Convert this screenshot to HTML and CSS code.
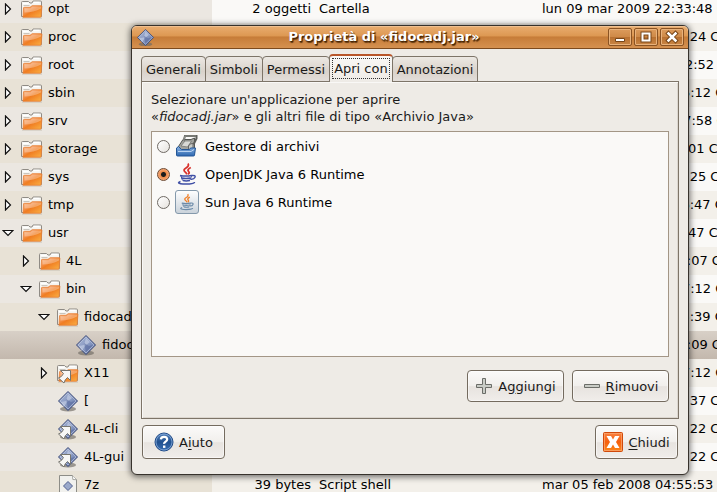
FILE: index.html
```html
<!DOCTYPE html>
<html lang="it">
<head>
<meta charset="utf-8">
<title>Proprietà di «fidocadj.jar»</title>
<link rel="stylesheet" href="styles.css">
</head>
<body>
<svg class="sprite" aria-hidden="true">
  <defs>
    <linearGradient id="g-folder" x1="0" y1="0" x2="1" y2="1">
      <stop offset="0" stop-color="#f7b98a"/><stop offset=".35" stop-color="#f4904a"/><stop offset=".5" stop-color="#f07d22"/><stop offset="1" stop-color="#fbb144"/>
    </linearGradient>
    <linearGradient id="g-diamond" x1="0" y1="0" x2="1" y2="1">
      <stop offset="0" stop-color="#a9b6d4"/><stop offset=".5" stop-color="#8b9cc4"/><stop offset="1" stop-color="#5a6c9e"/>
    </linearGradient>
    <linearGradient id="g-blue" x1="0" y1="0" x2="0" y2="1">
      <stop offset="0" stop-color="#8db4e2"/><stop offset="1" stop-color="#2c67b0"/>
    </linearGradient>
    <linearGradient id="g-help" x1="0" y1="0" x2="0" y2="1">
      <stop offset="0" stop-color="#5683bd"/><stop offset=".5" stop-color="#20508f"/><stop offset="1" stop-color="#3b70b4"/>
    </linearGradient>
    <linearGradient id="g-close" x1="0" y1="0" x2="0" y2="1">
      <stop offset="0" stop-color="#f98344"/><stop offset=".5" stop-color="#f65e0c"/><stop offset="1" stop-color="#fb8a1c"/>
    </linearGradient>
    <linearGradient id="g-tile" x1="0" y1="0" x2="0" y2="1">
      <stop offset="0" stop-color="#ffffff"/><stop offset="1" stop-color="#c9d2da"/>
    </linearGradient>
  </defs>
  <symbol id="arrow-right" viewBox="0 0 12 12"><path d="M3.500 1v10l5-5z" fill="#fff" stroke="#111" stroke-width="1.200"/></symbol>
  <symbol id="arrow-down" viewBox="0 0 12 12"><path d="M1 3.500h10L6 8.500z" fill="#fff" stroke="#111" stroke-width="1.200"/></symbol>
  <symbol id="folder" viewBox="0 0 24 24">
    <path d="M2 21h20" stroke="#b9b1a6" opacity=".7"/>
    <path d="M1.500 19.500V5.500q0-1 1-1h6l1.500 1.500h2l1-2h7.500q1 0 1 1v14.500z" fill="#f5f4f0" stroke="#8f8b85"/>
    <path d="M3 6.500h5.500M13.500 5.500h6" stroke="#fff" stroke-width="1.500"/>
    <path d="M3.500 8.500h6" stroke="#c9c5bd"/>
    <path d="M3 20.200l.5-9.200q0-.7.8-.7h5.700l2.200-1.600h9q.7 0 .7.700l-.8 10.100q0 .7-.7.700z" fill="url(#g-folder)" stroke="#e77f35" stroke-width=".8"/>
    <path d="M4.500 15.500q9-.2 16.500-4l.2-2h-8.800l-2 1.700H4.500z" fill="#fff" opacity=".3"/>
  </symbol>
  <symbol id="diamond" viewBox="0 0 24 24">
    <ellipse cx="12" cy="20" rx="8" ry="2.500" fill="#6f6a62" opacity=".65"/>
    <path d="M12 2.500l9.500 9.500-9.500 9.500L2.500 12z" fill="url(#g-diamond)" stroke="#3b4a79"/>
    <path d="M12 4l8 8-8 8-8-8z" fill="none" stroke="#c5cfe6" stroke-width=".8" opacity=".7"/>
    <path d="M12 5l4 4-5 4-3 5-3-5 5-1z" fill="#d6deef" opacity=".5"/>
    <path d="M10 10l5 3 4-1-7 7z" fill="#51649a" opacity=".5"/>
  </symbol>
  <symbol id="link" viewBox="0 0 24 24">
    <path d="M4.500 9.500h10v10l-3-3q-2.500 1.500-3.500 5.500l-5.500-5q3.500-1 5-4.500z" fill="#f7f7f5" stroke="#77766f" stroke-linejoin="round"/>
  </symbol>
  <symbol id="script" viewBox="0 0 24 24">
    <path d="M3.500 2.500h13l4 4v17h-17z" fill="#f1f1ee" stroke="#8d8d87"/>
    <path d="M16.500 2.500l.3 4 3.700.2" fill="#fff" stroke="#a8a8a2"/>
    <path d="M12 8.500l4.500 4.500-4.500 4.500L7.500 13z" fill="#9aa9cb" stroke="#526190"/>
  </symbol>
  <symbol id="archiver" viewBox="0 0 24 24">
    <path d="M2.500 14L8 5.500h8L19.500 4v15H6z" fill="#a3a49f" stroke="#555753"/>
    <path d="M8.500 7l1.500-5h11.500v2.500l-3 6" fill="none" stroke="#5d5e5a" stroke-width="2"/>
    <path d="M8.500 7L10 2h11" fill="none" stroke="#a9aaa5" stroke-width=".7"/>
    <path d="M6 12l4-5h6.500l-4 6z" fill="#d9dad6" stroke="#6f706c" stroke-width=".7"/>
    <path d="M13.500 12q1.500-3 4.500-2.500v9h-4.500z" fill="#c8cac4" stroke="#666"/>
    <path d="M1.500 14l2-1.500 3 3h8l1-1.500h5l-1 7q0 1-1 1H2.500q-1 0-1-1z" fill="url(#g-blue)" stroke="#245797"/>
    <path d="M3 17.500h13l3-2" stroke="#b9d3f1" fill="none"/>
  </symbol>
  <symbol id="java" viewBox="0 0 24 24">
    <path class="steam" d="M13 1.500q1.500 2.500-2 4.500t-.8 4q1.800 1.200 1.300 2.500M15.800 5.500q-4 2-2.300 3.800t-.5 3" fill="none" stroke-width="1.800"/>
    <path class="cup" d="M5 13.500q6 1.200 11.500 0M6.500 16q4.500 1 9 0M8 18.500q3 .9 7 0M16.500 13.500q4.500-.5 3.500 1.700t-4 2M5.500 19.500q-4 1.500 0 2.200t9 .2 5-2" fill="none" stroke-width="1.500"/>
    <path class="cup" d="M6 14l1.500 4.500M16.500 14l-1.500 4" fill="none"/>
  </symbol>
</svg>

<main class="browser">
  <table class="files">
    <colgroup><col class="c-name"><col class="c-size"><col class="c-type"><col></colgroup>
    <tbody>
      <tr><td><div class="name l0"><button class="exp" aria-label="Espandi opt"><svg><use href="#arrow-right"/></svg></button><svg class="ico"><use href="#folder"/></svg>opt</div></td><td>2 oggetti</td><td>Cartella</td><td>lun 09 mar 2009 22:33:48 CET</td></tr>
      <tr><td><div class="name l0"><button class="exp" aria-label="Espandi proc"><svg><use href="#arrow-right"/></svg></button><svg class="ico"><use href="#folder"/></svg>proc</div></td><td></td><td></td><td>gio 11 set 2008 09:14:24 CEST</td></tr>
      <tr><td><div class="name l0"><button class="exp" aria-label="Espandi root"><svg><use href="#arrow-right"/></svg></button><svg class="ico"><use href="#folder"/></svg>root</div></td><td></td><td></td><td>mar 08 apr 2008 17:02:52 CEST</td></tr>
      <tr><td><div class="name l0"><button class="exp" aria-label="Espandi sbin"><svg><use href="#arrow-right"/></svg></button><svg class="ico"><use href="#folder"/></svg>sbin</div></td><td></td><td></td><td>lun 26 gen 2009 18:25:12 CET</td></tr>
      <tr><td><div class="name l0"><button class="exp" aria-label="Espandi srv"><svg><use href="#arrow-right"/></svg></button><svg class="ico"><use href="#folder"/></svg>srv</div></td><td></td><td></td><td>gio 05 mar 2009 10:37:58 CET</td></tr>
      <tr><td><div class="name l0"><button class="exp" aria-label="Espandi storage"><svg><use href="#arrow-right"/></svg></button><svg class="ico"><use href="#folder"/></svg>storage</div></td><td></td><td></td><td>gio 16 ott 2008 21:40:01 CEST</td></tr>
      <tr><td><div class="name l0"><button class="exp" aria-label="Espandi sys"><svg><use href="#arrow-right"/></svg></button><svg class="ico"><use href="#folder"/></svg>sys</div></td><td></td><td></td><td>gio 11 set 2008 09:14:25 CEST</td></tr>
      <tr><td><div class="name l0"><button class="exp" aria-label="Espandi tmp"><svg><use href="#arrow-right"/></svg></button><svg class="ico"><use href="#folder"/></svg>tmp</div></td><td></td><td></td><td>ven 11 lug 2008 11:26:47 CEST</td></tr>
      <tr><td><div class="name l0"><button class="exp" aria-label="Comprimi usr"><svg><use href="#arrow-down"/></svg></button><svg class="ico"><use href="#folder"/></svg>usr</div></td><td></td><td></td><td>gio 16 ott 2008 16:20:47 CEST</td></tr>
      <tr><td><div class="name l1"><button class="exp" aria-label="Espandi 4L"><svg><use href="#arrow-right"/></svg></button><svg class="ico"><use href="#folder"/></svg>4L</div></td><td></td><td></td><td>sab 18 ott 2008 12:43:07 CEST</td></tr>
      <tr><td><div class="name l1"><button class="exp" aria-label="Comprimi bin"><svg><use href="#arrow-down"/></svg></button><svg class="ico"><use href="#folder"/></svg>bin</div></td><td></td><td></td><td>lun 26 gen 2009 18:27:12 CET</td></tr>
      <tr><td><div class="name l2"><button class="exp" aria-label="Comprimi fidocadj"><svg><use href="#arrow-down"/></svg></button><svg class="ico"><use href="#folder"/></svg>fidocadj</div></td><td></td><td></td><td>ven 11 lug 2008 11:35:39 CEST</td></tr>
      <tr class="selected"><td><div class="name l3"><svg class="ico"><use href="#diamond"/></svg>fidocadj.jar</div></td><td></td><td></td><td>sab 18 ott 2008 12:43:09 CEST</td></tr>
      <tr><td><div class="name l2"><button class="exp" aria-label="Espandi X11"><svg><use href="#arrow-right"/></svg></button><svg class="ico"><use href="#folder"/><use href="#link"/></svg>X11</div></td><td></td><td></td><td>lun 26 gen 2009 18:27:12 CET</td></tr>
      <tr><td><div class="name l2 leaf"><svg class="ico"><use href="#diamond"/></svg>[</div></td><td></td><td></td><td>gio 11 set 2008 14:08:37 CEST</td></tr>
      <tr><td><div class="name l2 leaf"><svg class="ico"><use href="#diamond"/><use href="#link"/></svg>4L-cli</div></td><td></td><td></td><td>gio 11 set 2008 15:51:22 CEST</td></tr>
      <tr><td><div class="name l2 leaf"><svg class="ico"><use href="#diamond"/><use href="#link"/></svg>4L-gui</div></td><td></td><td></td><td>gio 11 set 2008 15:51:22 CEST</td></tr>
      <tr><td><div class="name l2 leaf"><svg class="ico"><use href="#script"/></svg>7z</div></td><td>39 bytes</td><td>Script shell</td><td>mar 05 feb 2008 04:55:53 CET</td></tr>
    </tbody>
  </table>
</main>

<section class="dialog" role="dialog" aria-labelledby="dlg-title">
  <header class="titlebar">
    <svg class="win-icon" viewBox="2 2 20 20"><use href="#diamond" width="24" height="24"/></svg>
    <h1 id="dlg-title">Proprietà di «fidocadj.jar»</h1>
    <div class="win-buttons">
      <button aria-label="Riduci"><svg viewBox="0 0 22 16"><path d="M6.500 9.500h9v3h-9z" fill="#fff" stroke="#784618"/></svg></button>
      <button aria-label="Massimizza"><svg viewBox="0 0 22 16"><path d="M7.500 4.500h7v7h-7z" fill="none" stroke="#784618" stroke-width="4"/><path d="M7.500 4.500h7v7h-7z" fill="none" stroke="#fff" stroke-width="2"/></svg></button>
      <button aria-label="Chiudi finestra"><svg viewBox="0 0 22 16"><path d="M7.500 4.500l7 7M14.500 4.500l-7 7" stroke="#784618" stroke-width="4.500" stroke-linecap="square"/><path d="M7.500 4.500l7 7M14.500 4.500l-7 7" stroke="#fff" stroke-width="2.500" stroke-linecap="square"/></svg></button>
    </div>
  </header>

  <div class="content">
    <div class="tabs" role="tablist">
      <button role="tab" class="tab">Generali</button>
      <button role="tab" class="tab">Simboli</button>
      <button role="tab" class="tab">Permessi</button>
      <button role="tab" class="tab active" aria-selected="true"><span>Apri con</span></button>
      <button role="tab" class="tab">Annotazioni</button>
    </div>

    <div class="pane" role="tabpanel">
      <p class="intro">Selezionare un'applicazione per aprire<br>«<em>fidocadj.jar</em>» e gli altri file di tipo «Archivio Java»</p>
      <div class="apps" role="radiogroup">
        <label><input type="radio" name="app"><svg class="ico"><use href="#archiver"/></svg>Gestore di archivi</label>
        <label><input type="radio" name="app" checked><svg class="ico java-open"><use href="#java"/></svg>OpenJDK Java 6 Runtime</label>
        <label><input type="radio" name="app"><svg class="ico java-sun" viewBox="0 0 24 24"><rect x=".5" y=".5" width="23" height="23" rx="2.500" fill="url(#g-tile)" stroke="#8499ab"/><use href="#java" x="3" y="3" width="18" height="18"/></svg>Sun Java 6 Runtime</label>
      </div>
      <div class="actions">
        <button class="btn wide"><svg viewBox="0 0 18 18"><path d="M7.500 1.500h3v6h6v3h-6v6h-3v-6h-6v-3h6z" fill="#c9ccc6" stroke="#6b6d68"/></svg><span>A<u>g</u>giungi</span></button>
        <button class="btn wide"><svg viewBox="0 0 18 18"><path d="M1.500 7.500h15v3h-15z" fill="#c9ccc6" stroke="#6b6d68"/></svg><span><u>R</u>imuovi</span></button>
      </div>
    </div>

    <footer class="footer">
      <button class="btn big"><svg viewBox="0 0 20 20"><circle cx="10" cy="10" r="9" fill="url(#g-help)" stroke="#204a87"/><circle cx="10" cy="10" r="8" fill="none" stroke="#86abd9" stroke-width=".8"/><path d="M6.800 7.300q.3-2.500 3.200-2.500t3.200 2.400q0 1.300-1.600 2.400t-1.500 2.200" fill="none" stroke="#fff" stroke-width="2.200"/><path d="M9 13.500h2.400v2.400H9z" fill="#fff"/></svg><span>A<u>i</u>uto</span></button>
      <button class="btn big"><svg viewBox="0 0 20 20"><rect x=".5" y=".5" width="19" height="19" rx="1" fill="url(#g-close)" stroke="#d0490b"/><rect x="1.500" y="1.500" width="17" height="17" fill="none" stroke="#fba36d" stroke-width=".8"/><path d="M3.500 4H8l2 3.500L12 4h4.500L13 10l3.500 6H12l-2-3.500L8 16H3.500L7 10z" fill="#fff"/></svg><span><u>C</u>hiudi</span></button>
    </footer>
  </div>
</section>
</body>
</html>
```
FILE: styles.css
```css
* { box-sizing: border-box; }

body {
  margin: 0;
  min-height: 100vh;
  overflow: hidden;
  background: #faf9f7;
  color: #000;
  font: 13px "DejaVu Sans", sans-serif;
}

button {
  margin: 0;
  padding: 0;
  border: 0;
  background: none;
  color: inherit;
  font: inherit;
}

.sprite { position: absolute; width: 0; height: 0; }
.ico { width: 24px; height: 24px; flex: none; margin-right: 4px; }

/* File list behind the dialog, scrolled part of a row */
.browser { height: 100vh; overflow: hidden; }

.files {
  width: 100%;
  margin-top: -5px;
  border-collapse: collapse;
  table-layout: fixed;
}

.c-name { width: 212px; }
.c-size { width: 107px; }
.c-type { width: 223px; }

.files td {
  height: 28px;
  padding: 0;
  line-height: 28px;
  white-space: nowrap;
  overflow: hidden;
  background: #faf9f7;
}
.files tr:nth-child(even) td { background: #f3f0ea; }
.files td:first-child { background: #ebe7e1; }
.files tr:nth-child(even) td:first-child { background: #e8e2d6; }
.files td:nth-child(2) { padding-right: 8px; text-align: right; }
.files tr.selected td,
.files tr.selected td:first-child { background: linear-gradient(#d8d0c7, #c3b8ad); }

.name { display: flex; align-items: center; height: 28px; }
.exp { display: flex; width: 12px; height: 12px; margin: 0 6px 0 2px; }
.exp svg { width: 12px; height: 12px; }
.l1 { padding-left: 18px; }
.l2 { padding-left: 36px; }
.l2.leaf { padding-left: 56px; }
.l3 { padding-left: 74px; }

/* Properties window */
.dialog {
  position: absolute;
  top: 25px;
  left: 131px;
  right: 28px;
  border: 1px solid #37322c;
  border-radius: 6px;
  background: #eeebe6;
  color: #1a1a1a;
  box-shadow: 0 1px 6px 1px rgba(0, 0, 0, .55);
}

.titlebar {
  display: flex;
  align-items: center;
  height: 23px;
  padding: 0 4px 0 5px;
  border-bottom: 1px solid #7c4a1e;
  border-radius: 5px 5px 0 0;
  background: linear-gradient(#e9ad70 0, #dd9852 45%, #c67c38 50%, #d59150 100%);
  box-shadow: inset 0 1px #f0c090;
}
.win-icon { width: 17px; height: 17px; }
.titlebar h1 {
  flex: 1;
  margin: 0;
  padding-left: 6px;
  color: #fff;
  font-size: 13px;
  line-height: 22px;
  text-align: center;
  text-shadow: 1px 1px 1px #402000, 1px 2px 1px rgba(64, 32, 0, .7);
}
.win-buttons { display: flex; gap: 2px; }
.win-buttons button {
  width: 24px;
  height: 18px;
  border: 1px solid #8a5323;
  border-radius: 2px;
  background: linear-gradient(#dc9b5c 0, #cf8a48 48%, #b87030 50%, #c98544 100%);
  box-shadow: inset 0 0 0 1px #e8b27c;
}
.win-buttons svg { display: block; width: 22px; height: 16px; }

.content { padding: 5px 9px 15px; }

.tabs { display: flex; align-items: flex-end; height: 28px; margin-bottom: -1px; }
.tab {
  height: 26px;
  margin-right: -1px;
  padding: 0 4px;
  border: 1px solid #7d7468;
  border-radius: 4px 4px 0 0;
  background: linear-gradient(#ece8e3, #d9d2ca 60%, #e3deda);
}
.tab.active {
  position: relative;
  height: 28px;
  padding: 0 2px;
  border-top: 2px solid #b9562a;
  border-bottom: 0;
  background: linear-gradient(#f9f8f6, #eeebe6);
}
.tab.active span { display: block; padding: 0 1px; border: 1px dotted #333; line-height: 19px; margin-bottom: 2px; }

.pane {
  padding: 9px 9px 16px;
  border: 1px solid #7d7468;
  box-shadow: inset 1px 1px #f9f8f6, inset -1px -1px #dbd6cf;
}
.intro { margin: 0 0 6px; line-height: 17px; }

.apps {
  min-height: 226px;
  border: 1px solid #a39686;
  background: #faf9f7;
  color: #000;
}
.apps label { display: flex; align-items: center; height: 28px; padding-left: 5px; }
.apps .ico { margin-right: 6px; }
.apps input {
  appearance: none;
  width: 13px;
  height: 13px;
  margin: 0 5px 0 0;
  border: 1px solid #6f6a64;
  border-radius: 50%;
  background: linear-gradient(135deg, #fff, #e6e3de);
}
.apps input:checked {
  border-color: #6e4a32;
  background: radial-gradient(circle at center, #1c1c1c 0, #1c1c1c 2px, #ee8a48 3px, #f7b083 6px);
}

.java-open { --steam: #d8322c; --cup: #3f4fa5; }
.java-sun { --steam: #f0812a; --cup: #6b8aa8; }
.steam { stroke: var(--steam); }
.cup { stroke: var(--cup); }

.actions { display: flex; justify-content: flex-end; gap: 8px; margin-top: 13px; }
.footer { display: flex; justify-content: space-between; margin-top: 6px; padding: 0 1px; }

.btn {
  display: flex;
  align-items: center;
  justify-content: center;
  gap: 5px;
  border: 1px solid #746b5f;
  border-radius: 4px;
  background: linear-gradient(#fbfaf9 0, #f1efec 50%, #e7e3df 52%, #f0edea 100%);
  box-shadow: inset 0 0 0 1px rgba(255, 255, 255, .5);
}
.btn u { text-underline-offset: 2px; }
.wide { width: 97px; height: 32px; }
.wide svg { width: 18px; height: 18px; }
.big { width: 83px; height: 34px; }
.big svg { width: 20px; height: 20px; }
```
